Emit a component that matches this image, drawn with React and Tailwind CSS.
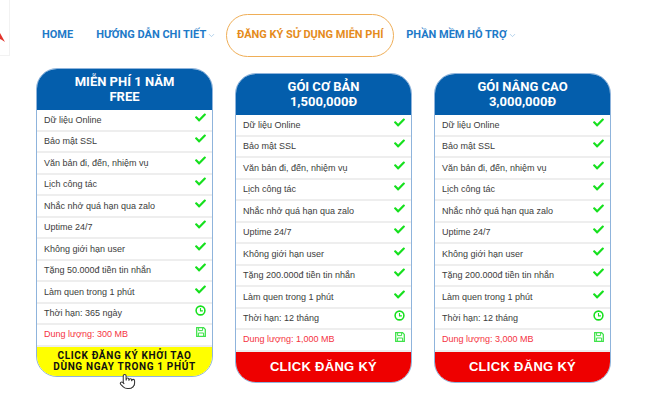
import React from "react";
import { ChevronDown, Pointer } from "lucide-react";
import { FaCheck } from "react-icons/fa";

const features = (message, term, storage) => [
    "Dữ liệu Online",
    "Bảo mật SSL",
    "Văn bản đi, đến, nhiệm vụ",
    "Lịch công tác",
    "Nhắc nhở quá hạn qua zalo",
    "Uptime 24/7",
    "Không giới hạn user",
    `Tặng ${message} tiền tin nhắn`,
    "Làm quen trong 1 phút",
    `Thời hạn: ${term}`,
    `Dung lượng: ${storage}`,
];

const plans = [
    { id: 1, title: "MIỄN PHÍ 1 NĂM", sub: "FREE", rows: features("50.000đ", "365 ngày", "300 MB"), free: true },
    { id: 2, title: "GÓI CƠ BẢN", sub: "1,500,000Đ", rows: features("200.000đ", "12 tháng", "1,000 MB") },
    { id: 3, title: "GÓI NÂNG CAO", sub: "3,000,000Đ", rows: features("200.000đ", "12 tháng", "3,000 MB") },
];

// Reloj con aro grueso, como el de la captura
const ClockIcon = () => (
    <svg width="11" height="11" viewBox="0 0 12 12" fill="none" stroke="currentColor">
        <circle cx="6" cy="6" r="4.8" strokeWidth="1.7" />
        <path d="M6 3.2V6.4H8.6" strokeWidth="1.2" />
    </svg>
);

// Disquete con contorno, más claro que el check
const SaveIcon = () => (
    <svg width="10" height="10" viewBox="0 0 10 10" fill="none" stroke="#3fe24a">
        <path d="M0.7 0.7H7.6L9.3 2.4V9.3H0.7Z" strokeWidth="1.3" />
        <path d="M2.6 1V3.6H6.6V1" strokeWidth="1" />
        <path d="M2.4 9V6H7.6V9" strokeWidth="1" />
    </svg>
);

const PlanCard = ({ plan }) => (
    <div className={`relative w-[177px] shrink-0 rounded-[21px] border border-[#8fb4dc] overflow-hidden bg-white ${plan.free ? "" : "mt-[5px]"}`}>
        {/* Cabecera */}
        <div className="h-[41px] bg-[#045eac] pt-[5px] text-center text-white text-[13px] leading-[15px] font-bold font-['Roboto',sans-serif]">
            <div>{plan.title}</div>
            <div>{plan.sub}</div>
        </div>
        {/* Filas */}
        {plan.rows.map((row, i) => {
            const isLast = i === plan.rows.length - 1;
            return (
                <div key={row} className={`flex items-center justify-between h-[21.5px] pl-[7px] pr-[6px] border-b-2 border-[#eeeeee] text-[9px] font-['Liberation_Sans',sans-serif] ${isLast ? "text-[#f5333f] border-b-0" : "text-[#3c3c3c]"}`}>
                    <span className={isLast ? "" : "pt-[1px]"}>{row}</span>
                    <span className="text-[#16e01e] text-[11px] -mt-[5px]">
                        {i === 9 ? <ClockIcon /> : isLast ? <SaveIcon /> : <FaCheck />}
                    </span>
                </div>
            );
        })}
        {/* Botón */}
        {plan.free ? (
            <div className="h-[29px] bg-[#ffff00] text-center text-[#111] text-[10px] leading-[11px] pt-[3px] font-bold tracking-[0.65px] font-['Roboto',sans-serif]">
                <div>CLICK ĐĂNG KÝ KHỞI TẠO</div>
                <div>DÙNG NGAY TRONG 1 PHÚT</div>
            </div>
        ) : (
            <div className="h-[30px] flex items-center justify-center bg-[#ee0000] text-white text-[13px] font-bold tracking-[0.3px] font-['Liberation_Sans',sans-serif]">
                CLICK ĐĂNG KÝ
            </div>
        )}
    </div>
);

export default function App() {
    return (
        <div className="relative w-[654px] h-[400px] overflow-hidden bg-white font-['Roboto',sans-serif]">
            {/* Logo recortado */}
            <div className="absolute left-0 top-0 w-[10px] h-[56px] border-r border-b border-[#f2f2f2]">
                <svg width="6" height="12" viewBox="0 0 6 12" className="absolute left-0 top-[32px]">
                    <path d="M0 1 L5 10 L2 8 L0 7 Z" fill="#e2342c" />
                </svg>
            </div>

            {/* Menú */}
            <nav className="flex items-center h-[43px] mt-[14px] pl-[42px] text-[11px] font-bold text-[#1e7ac8]">
                <span>HOME</span>
                <span className="ml-[23px]">HƯỚNG DẪN CHI TIẾT</span>
                <ChevronDown className="w-[9px] h-[9px] ml-[1px] text-[#9cc4e6]" />
                <span className="ml-[10px] h-[43px] w-[168px] flex items-center justify-center rounded-[22px] border border-[#efae57] text-[#e58c1c]">
                    ĐĂNG KÝ SỬ DỤNG MIỄN PHÍ
                </span>
                <span className="ml-[12px]">PHẦN MỀM HỖ TRỢ</span>
                <ChevronDown className="w-[9px] h-[9px] ml-[1px] text-[#9cc4e6]" />
            </nav>

            {/* Planes */}
            <div className="flex items-start gap-[22px] mt-[11px] pl-[36px]">
                {plans.map((plan) => (
                    <PlanCard key={plan.id} plan={plan} />
                ))}
            </div>

            {/* Cursor */}
            <Pointer className="absolute left-[119px] top-[371px] w-[17px] h-[21px] text-[#333] fill-white" strokeWidth={1.5} />
        </div>
    );
}
